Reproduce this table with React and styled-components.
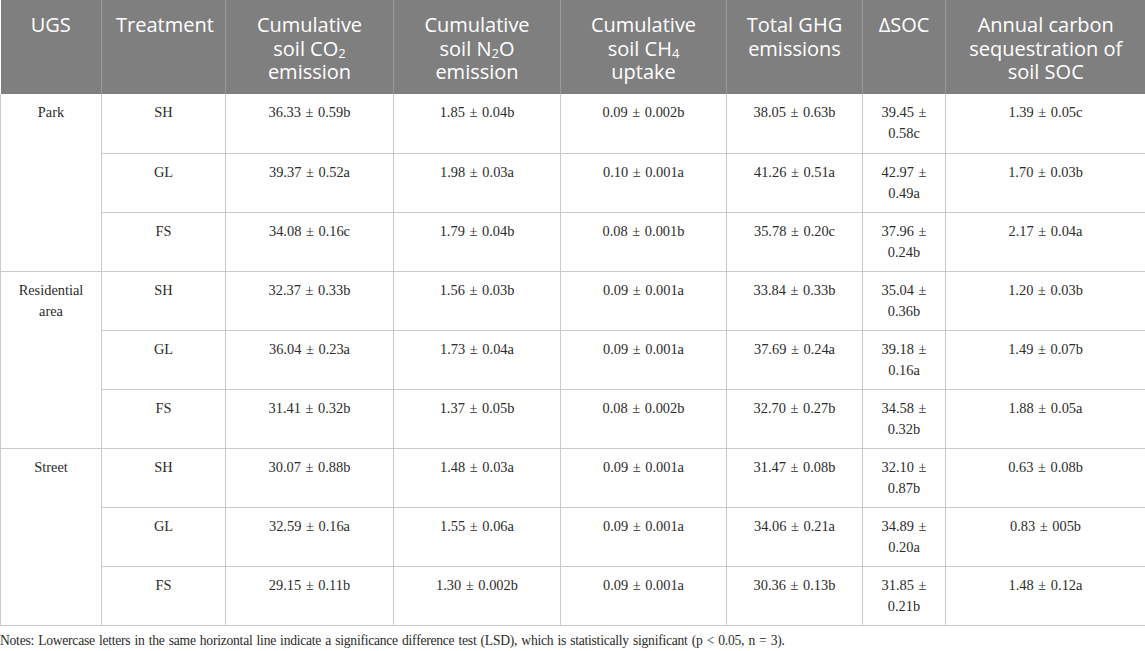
import React from "react";
import styled, { createGlobalStyle } from "styled-components";

const GlobalStyle = createGlobalStyle`
  html, body {
    margin: 0;
    padding: 0;
    background: #fff;
  }
`;

const cols = [101, 124, 168, 167, 166, 136, 83, 200];

const groups = [
  {
    ugs: "Park",
    rows: [
      ["SH", "36.33 ± 0.59b", "1.85 ± 0.04b", "0.09 ± 0.002b", "38.05 ± 0.63b", "39.45 ± 0.58c", "1.39 ± 0.05c"],
      ["GL", "39.37 ± 0.52a", "1.98 ± 0.03a", "0.10 ± 0.001a", "41.26 ± 0.51a", "42.97 ± 0.49a", "1.70 ± 0.03b"],
      ["FS", "34.08 ± 0.16c", "1.79 ± 0.04b", "0.08 ± 0.001b", "35.78 ± 0.20c", "37.96 ± 0.24b", "2.17 ± 0.04a"],
    ],
  },
  {
    ugs: "Residential area",
    rows: [
      ["SH", "32.37 ± 0.33b", "1.56 ± 0.03b", "0.09 ± 0.001a", "33.84 ± 0.33b", "35.04 ± 0.36b", "1.20 ± 0.03b"],
      ["GL", "36.04 ± 0.23a", "1.73 ± 0.04a", "0.09 ± 0.001a", "37.69 ± 0.24a", "39.18 ± 0.16a", "1.49 ± 0.07b"],
      ["FS", "31.41 ± 0.32b", "1.37 ± 0.05b", "0.08 ± 0.002b", "32.70 ± 0.27b", "34.58 ± 0.32b", "1.88 ± 0.05a"],
    ],
  },
  {
    ugs: "Street",
    rows: [
      ["SH", "30.07 ± 0.88b", "1.48 ± 0.03a", "0.09 ± 0.001a", "31.47 ± 0.08b", "32.10 ± 0.87b", "0.63 ± 0.08b"],
      ["GL", "32.59 ± 0.16a", "1.55 ± 0.06a", "0.09 ± 0.001a", "34.06 ± 0.21a", "34.89 ± 0.20a", "0.83 ± 005b"],
      ["FS", "29.15 ± 0.11b", "1.30 ± 0.002b", "0.09 ± 0.001a", "30.36 ± 0.13b", "31.85 ± 0.21b", "1.48 ± 0.12a"],
    ],
  },
];

const Page = styled.div`
  width: 1145px;
  font-family: "Liberation Serif", "Times New Roman", serif;
  color: #2b2b2b;
`;

const Table = styled.table`
  width: 1145px;
  border-collapse: collapse;
  table-layout: fixed;
`;

const Col = styled.col`
  width: ${({ $w }) => $w}px;
`;

const HeadRow = styled.tr`
  height: 94px;
  background: #7f7f7f;
`;

const Th = styled.th`
  vertical-align: top;
  padding: 13px 14px 0;
  font-family: "Open Sans", "Liberation Sans", sans-serif;
  font-weight: 400;
  font-size: 20px;
  line-height: 23.5px;
  color: #fff;
  text-align: center;
  border-left: 1px solid #9a9a9a;
  &:first-child {
    border-left: none;
  }
`;

const Sub = styled.sub`
  font-size: 13px;
  line-height: 0;
  vertical-align: -2px;
`;

const Row = styled.tr`
  height: 59.1px;
`;

const Td = styled.td`
  vertical-align: top;
  padding: 8px 8px 0;
  font-size: 14.4px;
  line-height: 21px;
  text-align: center;
  word-spacing: 1px;
  border: 1px solid #cbcbcb;
  border-top: ${({ $first }) => ($first ? "none" : "1px solid #cbcbcb")};
`;

const Notes = styled.p`
  margin: 5px 0 0;
  font-size: 13.6px;
  line-height: 20px;
  letter-spacing: -0.25px;
  word-spacing: 1px;
  color: #2b2b2b;
`;

export default function App() {
  return (
    <Page>
      <GlobalStyle />
      <Table>
        <colgroup>
          {cols.map((w, i) => (
            <Col key={i} $w={w} />
          ))}
        </colgroup>
        <thead>
          <HeadRow>
            <Th>UGS</Th>
            <Th>Treatment</Th>
            <Th>
              Cumulative soil CO<Sub>2</Sub> emission
            </Th>
            <Th>
              Cumulative soil N<Sub>2</Sub>O emission
            </Th>
            <Th>
              Cumulative soil CH<Sub>4</Sub> uptake
            </Th>
            <Th>Total GHG emissions</Th>
            <Th>ΔSOC</Th>
            <Th>Annual carbon sequestration of soil SOC</Th>
          </HeadRow>
        </thead>
        <tbody>
          {groups.map((g, gi) =>
            g.rows.map((r, ri) => (
              <Row key={`${gi}-${ri}`}>
                {ri === 0 && (
                  <Td rowSpan={3} $first={gi === 0}>
                    {g.ugs}
                  </Td>
                )}
                {r.map((v, ci) => (
                  <Td key={ci} $first={gi === 0 && ri === 0}>
                    {v}
                  </Td>
                ))}
              </Row>
            ))
          )}
        </tbody>
      </Table>
      <Notes>
        Notes: Lowercase letters in the same horizontal line indicate a significance difference test (LSD), which is
        statistically significant (p &lt; 0.05, n = 3).
      </Notes>
    </Page>
  );
}
